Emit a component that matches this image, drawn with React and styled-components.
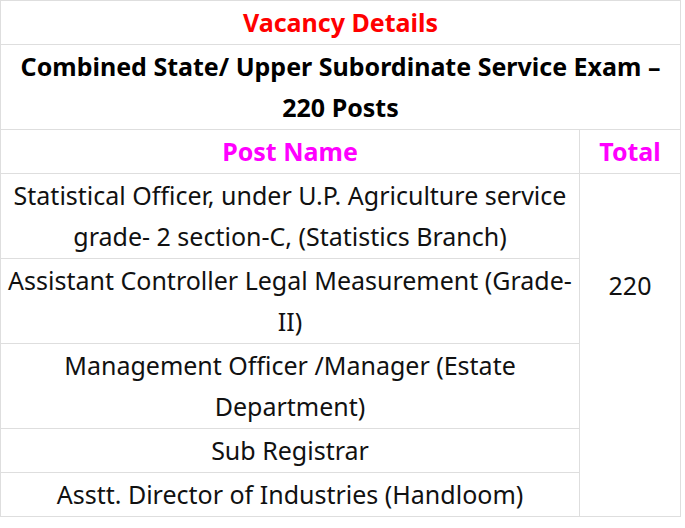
import React from 'react';
import styled, { createGlobalStyle } from 'styled-components';

const GlobalStyle = createGlobalStyle`
    body {
        margin: 0;
        background: #fff;
        font-family: "Noto Sans", "Open Sans", sans-serif;
    }
`

const Table = styled.table`
    width: 681px;
    border-collapse: collapse;
    color: #000;
    font-size: 25px;
    line-height: 41px;
    td, th {
        border: 1px solid #dedede;
        padding: 1px 5px;
        text-align: center;
        vertical-align: middle;
    }
`

const Heading = styled.th`
    color: ${props => props.color || '#000'};
    font-weight: 700;
`

const PostCell = styled.td`
    width: 568px;
    color: #111;
`

// the number sits a bit above the middle of its tall cell
const TotalCell = styled.td`
    color: #111;
    && {
        vertical-align: top;
        padding-top: 91px;
    }
`

const posts = [
    'Statistical Officer, under U.P. Agriculture service grade- 2 section-C, (Statistics Branch)',
    'Assistant Controller Legal Measurement (Grade-II)',
    'Management Officer /Manager (Estate Department)',
    'Sub Registrar',
    'Asstt. Director of Industries (Handloom)',
]

const App = () => {
    return (
        <>
            <GlobalStyle />
            <Table>
                <tbody>
                    <tr>
                        <Heading colSpan={2} color='#f00'>Vacancy Details</Heading>
                    </tr>
                    <tr>
                        <Heading colSpan={2}>Combined State/ Upper Subordinate Service Exam – 220 Posts</Heading>
                    </tr>
                    <tr>
                        <Heading color='#f0f'>Post Name</Heading>
                        <Heading color='#f0f'>Total</Heading>
                    </tr>
                    {posts.map((post, index) => (
                        <tr key={index}>
                            <PostCell>{post}</PostCell>
                            {index === 0 && <TotalCell rowSpan={posts.length}>220</TotalCell>}
                        </tr>
                    ))}
                </tbody>
            </Table>
        </>
    );
};

export default App;
